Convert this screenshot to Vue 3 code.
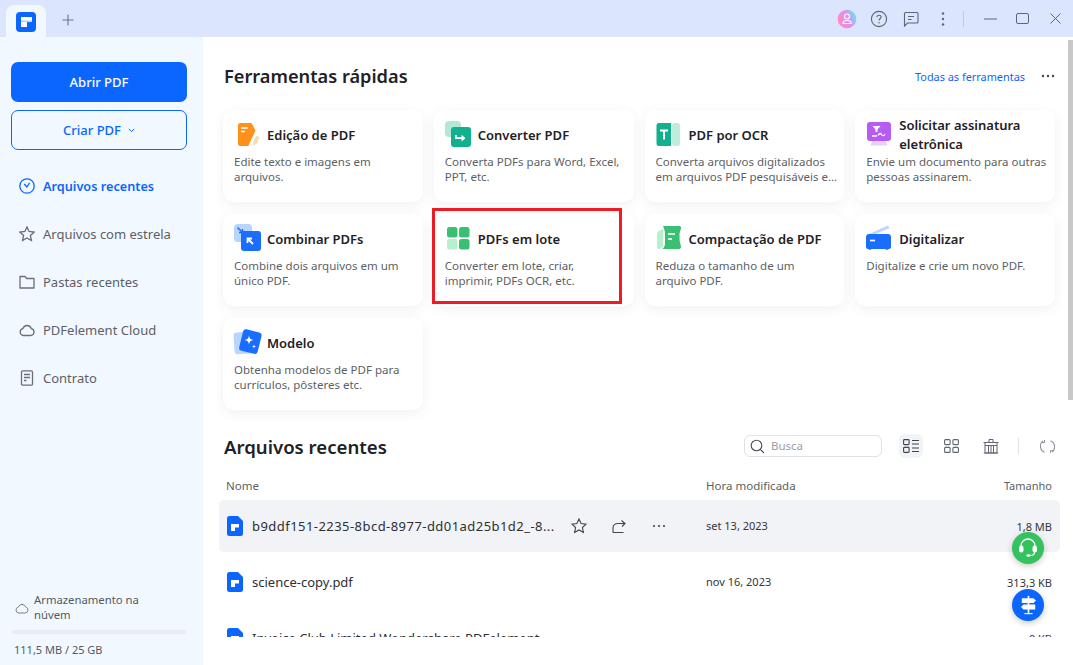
<script setup>
const nav = [
  { label: 'Arquivos recentes', icon: 'clock', active: true },
  { label: 'Arquivos com estrela', icon: 'star' },
  { label: 'Pastas recentes', icon: 'folder' },
  { label: 'PDFelement Cloud', icon: 'cloud' },
  { label: 'Contrato', icon: 'doc' },
]
const tools = [
  { title: 'Edição de PDF', desc: 'Edite texto e imagens em arquivos.', icon: 'edit' },
  { title: 'Converter PDF', desc: 'Converta PDFs para Word, Excel, PPT, etc.', icon: 'convert' },
  { title: 'PDF por OCR', desc: 'Converta arquivos digitalizados em arquivos PDF pesquisáveis e...', icon: 'ocr' },
  { title: 'Solicitar assinatura eletrônica', desc: 'Envie um documento para outras pessoas assinarem.', icon: 'sign' },
  { title: 'Combinar PDFs', desc: 'Combine dois arquivos em um único PDF.', icon: 'combine' },
  { title: 'PDFs em lote', desc: 'Converter em lote, criar, imprimir, PDFs OCR, etc.', icon: 'batch', marked: true },
  { title: 'Compactação de PDF', desc: 'Reduza o tamanho de um arquivo PDF.', icon: 'compress' },
  { title: 'Digitalizar', desc: 'Digitalize e crie um novo PDF.', icon: 'scan' },
  { title: 'Modelo', desc: 'Obtenha modelos de PDF para currículos, pôsteres etc.', icon: 'model' },
]
const files = [
  { name: 'b9ddf151-2235-8bcd-8977-dd01ad25b1d2_-8...', date: 'set 13, 2023', size: '1,8 MB', hover: true },
  { name: 'science-copy.pdf', date: 'nov 16, 2023', size: '313,3 KB' },
  { name: 'Invoice Club Limited Wondershare PDFelement', date: '', size: '0 KB' },
]
</script>

<template>
  <div class="app">
    <header class="titlebar">
      <div class="tab">
        <svg width="20" height="20" viewBox="0 0 20 20">
          <rect width="20" height="20" rx="4" fill="#0a66ff" />
          <path d="M5 5h11v5h-5v5H5z" fill="#fff" />
          <rect x="5" y="8.5" width="11" height="1.6" fill="#b9d2ff" />
        </svg>
      </div>
      <svg class="plus" width="12" height="12" viewBox="0 0 12 12">
        <path d="M6 .5v11M.5 6h11" stroke="#6f7480" stroke-width="1.1" fill="none" />
      </svg>
      <div class="win-tools">
        <div class="tbtn">
          <svg width="20" height="20" viewBox="0 0 20 20">
            <defs>
              <linearGradient id="av" x1="0" y1="0.7" x2="1" y2="0.3">
                <stop offset="0" stop-color="#ff8ac0" />
                <stop offset=".55" stop-color="#e58cf5" />
                <stop offset="1" stop-color="#5fe8f7" />
              </linearGradient>
            </defs>
            <circle cx="10" cy="10" r="9.3" fill="url(#av)" />
            <circle cx="10" cy="7.5" r="2.5" fill="none" stroke="#fff" stroke-width="1.1" />
            <path d="M5.8 14.5c0-2.2 1.8-3 4.2-3s4.2.8 4.2 3z" fill="none" stroke="#fff" stroke-width="1.1" />
          </svg>
        </div>
        <div class="tbtn">
          <svg width="18" height="18" viewBox="0 0 18 18">
            <circle cx="9" cy="9" r="7.6" fill="none" stroke="#5f6672" stroke-width="1.1" />
            <path d="M6.9 7.2c0-1.3 1-2 2.1-2s2.1.8 2.1 1.9c0 1.600-2.100 1.600-2.100 3.300" fill="none" stroke="#5f6672" stroke-width="1.1" />
            <circle cx="9" cy="12.700" r=".8" fill="#5f6672" />
          </svg>
        </div>
        <div class="tbtn">
          <svg width="16" height="16" viewBox="0 0 16 16">
            <path d="M2.500 1.500h11.500a1 1 0 0 1 1 1v8.500a1 1 0 0 1-1 1H4.500L1.500 15V2.500a1 1 0 0 1 1-1z" fill="none" stroke="#5f6672" stroke-width="1.100" />
            <path d="M5 5.500h6M5 8.500h3.500" stroke="#5f6672" stroke-width="1.100" fill="none" />
          </svg>
        </div>
        <div class="tbtn">
          <svg width="4" height="14" viewBox="0 0 4 14">
            <circle cx="2" cy="1.500" r="1.200" fill="#5f6672" />
            <circle cx="2" cy="7" r="1.200" fill="#5f6672" />
            <circle cx="2" cy="12.500" r="1.200" fill="#5f6672" />
          </svg>
        </div>
        <span class="tdivider"></span>
        <div class="tbtn">
          <svg width="13" height="2" viewBox="0 0 13 2"><path d="M0 1h13" stroke="#5f6672" stroke-width="1" /></svg>
        </div>
        <div class="tbtn">
          <svg width="13" height="11" viewBox="0 0 13 11"><rect x=".5" y=".5" width="12" height="10" rx="1.500" fill="none" stroke="#5f6672" /></svg>
        </div>
        <div class="tbtn close">
          <svg width="11" height="11" viewBox="0 0 11 11"><path d="M.5.5l10 10M10.500.5l-10 10" stroke="#5f6672" fill="none" /></svg>
        </div>
      </div>
    </header>

    <div class="body">
      <aside class="sidebar">
        <button class="btn primary"><span>Abrir PDF</span></button>
        <button class="btn outline">
          <span>Criar PDF</span>
          <svg width="7" height="5" viewBox="0 0 7 5"><path d="M.8 1l2.700 2.500L6.200 1" stroke="#0a66ff" fill="none" /></svg>
        </button>
        <nav class="nav">
          <div v-for="n in nav" :key="n.label" class="nav-item" :class="{ active: n.active }">
            <svg width="16" height="16" viewBox="0 0 16 16" fill="none" stroke="currentColor" stroke-width="1.300">
              <template v-if="n.icon === 'clock'">
                <circle cx="8" cy="8" r="7.200" />
                <path d="M5.300 6l2.500 3 2.800-4.200" />
              </template>
              <path v-else-if="n.icon === 'star'" d="M8 .9l2.100 4.600 5 .6-3.700 3.400 1 5L8 12 3.600 14.500l1-5L.9 6.100l5-.6z" />
              <path v-else-if="n.icon === 'folder'" d="M1 2.500h5l1.800 2H15v9.500H1z" stroke-linejoin="round" />
              <path v-else-if="n.icon === 'cloud'" d="M4.500 13.500a3.500 3.500 0 0 1-.6-6.900 4.400 4.400 0 0 1 8.400 0 3.500 3.500 0 0 1-.6 6.900z" />
              <template v-else>
                <rect x="2.500" y=".8" width="11" height="14.400" rx="1.200" />
                <path d="M5 4.500h6M5 7.500h6M5 10.500h2.500" />
              </template>
            </svg>
            <span>{{ n.label }}</span>
          </div>
        </nav>
        <div class="storage">
          <div class="storage-label">
            <svg width="14" height="11" viewBox="0 0 14 11" fill="none" stroke="#7b7f87">
              <path d="M3.800 10a3 3 0 0 1-.5-5.900 3.900 3.900 0 0 1 7.400 0 3 3 0 0 1-.5 5.900z" />
            </svg>
            <span>Armazenamento na núvem</span>
          </div>
          <div class="progress"></div>
          <div class="usage">111,5 MB / 25 GB</div>
        </div>
      </aside>

      <main class="main">
        <div class="scrollbar"></div>
        <div class="section-head">
          <h2>Ferramentas rápidas</h2>
          <a class="all">Todas as ferramentas</a>
          <svg class="more" width="14" height="4" viewBox="0 0 14 4">
            <circle cx="2" cy="2" r="1.200" fill="#444" /><circle cx="7" cy="2" r="1.200" fill="#444" /><circle cx="12" cy="2" r="1.200" fill="#444" />
          </svg>
        </div>

        <div class="grid">
          <div v-for="t in tools" :key="t.title" class="card">
            <div class="card-head">
              <svg class="tool-icon" width="28" height="28" viewBox="0 0 28 28">
                <template v-if="t.icon === 'edit'">
                  <path d="M19 21l3.500-6.500 3 1.700L23 22.500l-3.500 2z" fill="#fbd9a8" />
                  <path d="M6.500 2h9.500c1 0 1.800.5 2.300 1.400l3.200 6.200-7.200 15.400H6.500A2.500 2.500 0 0 1 4 22.500v-18A2.500 2.500 0 0 1 6.500 2z" fill="#ff9019" />
                  <path d="M7 7h7M7 10.500h4" stroke="#fff" stroke-width="1.500" />
                </template>
                <template v-else-if="t.icon === 'convert'">
                  <rect width="16" height="16" rx="4" fill="#b3e8d8" />
                  <rect x="6" y="6" width="20" height="20" rx="3" fill="#12b08e" />
                  <path d="M11 14v3.200h6" stroke="#fff" stroke-width="1.800" fill="none" />
                  <path d="M16.500 13.800l4 3.400-4 3.400z" fill="#fff" />
                </template>
                <template v-else-if="t.icon === 'ocr'">
                  <rect x="16" y="2" width="8" height="23" rx="2.500" fill="#bdeedd" />
                  <path d="M3 2h12v23H3a2.500 2.500 0 0 1-2.500-2.500v-18A2.500 2.500 0 0 1 3 2z" fill="#12b08e" />
                  <path d="M4 8.500h8v2H9v8H7v-8H4z" fill="#fff" />
                </template>
                <template v-else-if="t.icon === 'sign'">
                  <path d="M6 20h14l1.500 4.500h-17z" fill="#e6d0ff" />
                  <rect x="1" y="1" width="24" height="19" rx="3" fill="#b65cf5" />
                  <path d="M6.500 5h8l-3 3.500v2.500h-2V8.500z" fill="#fff" />
                  <path d="M6 15h5" stroke="#fff" stroke-width="1.500" />
                  <path d="M12 14.500c1.500-2.500 2.500-2.500 3.500-1s2 1.500 3.500 0" stroke="#fff" stroke-width="1.300" fill="none" />
                </template>
                <template v-else-if="t.icon === 'combine'">
                  <rect y="-1" width="18" height="18" rx="3.500" fill="#b8d6fd" />
                  <path d="M3.500 2.500l5 5M5 7.500h3.500V4" stroke="#1a6bf2" stroke-width="1.500" fill="none" />
                  <rect x="7" y="6" width="20" height="20" rx="3" fill="#1a6eff" />
                  <path d="M19 19l-5-5M13.500 18v-4.500H18" stroke="#fff" stroke-width="1.800" fill="none" />
                </template>
                <template v-else-if="t.icon === 'batch'">
                  <rect x="2" y="2" width="10.500" height="10.500" rx="2.500" fill="#3bbf73" />
                  <rect x="14" y="2" width="10.500" height="10.500" rx="2.500" fill="#3bbf73" />
                  <rect x="2" y="14" width="10.500" height="10.500" rx="2.500" fill="#b7f0cd" />
                  <rect x="14" y="14" width="10.500" height="10.500" rx="2.500" fill="#3bbf73" />
                </template>
                <template v-else-if="t.icon === 'compress'">
                  <path d="M3 6l4-2v18l-4 2c-1 .5-2-1-2-2V9c0-1 1-2.500 2-3z" fill="#b7f0cd" />
                  <path d="M7 1h16c1.500 0 2.500 1.200 2 2.500l-1.500 5 .1 7 1.400 6c.3 1.600-.7 2.500-2 2.500H6.500c2-2 2.500-4 2.500-6V9c0-3-1-6-2-8z" fill="#3bbf73" />
                  <path d="M12 9h7M12 14h4" stroke="#fff" stroke-width="1.700" />
                </template>
                <template v-else-if="t.icon === 'scan'">
                  <path d="M3 9L22 .5l1.500 2.500L7 10z" fill="#b8d6fd" />
                  <path d="M3 9h19c1.700 0 3 1.300 3 3v10c0 1-1 2-2 2h-.5l-1 .8h-1.500l-.6-.8H5.500l-.6.8H3.300l-.8-.8H2c-1 0-2-1-2-2V12c0-1.700 1.300-3 3-3z" fill="#1a6eff" />
                  <path d="M4 15.500h5" stroke="#fff" stroke-width="1.700" />
                </template>
                <template v-else>
                  <rect x="0" y="3" width="19" height="22" rx="3.500" fill="#b8d6fd" transform="rotate(-4 9 14)" />
                  <rect x="7" y="1.500" width="19" height="22" rx="3" fill="#1a6eff" transform="rotate(14 16 12)" />
                  <path d="M15 6.500c.5 3 1.500 4 4.500 4.500-3 .5-4 1.500-4.500 4.500-.5-3-1.500-4-4.500-4.500 3-.5 4-1.500 4.500-4.500z" fill="#fff" />
                  <path d="M20 15.500c.2 1.300.7 1.800 2 2-1.300.2-1.800.7-2 2-.2-1.300-.7-1.800-2-2 1.300-.2 1.800-.7 2-2z" fill="#fff" />
                </template>
              </svg>
              <h3>{{ t.title }}</h3>
            </div>
            <p :class="{ narrow: t.marked }">{{ t.desc }}</p>
            <div v-if="t.marked" class="marker"></div>
          </div>
        </div>

        <div class="recent-head">
          <h2>Arquivos recentes</h2>
          <div class="search">
            <svg width="15" height="15" viewBox="0 0 15 15" fill="none" stroke="#4a4f58" stroke-width="1.100">
              <circle cx="6.500" cy="6.500" r="5.300" /><path d="M10.500 10.500l3.500 3.500" />
            </svg>
            <span>Busca</span>
          </div>
          <div class="view active">
            <svg width="16" height="14" viewBox="0 0 16 14" fill="none" stroke="#3f4651" stroke-width="1.100">
              <rect x=".6" y=".6" width="5.500" height="5" rx=".8" /><rect x=".6" y="8.400" width="5.500" height="5" rx=".8" />
              <path d="M9 1.500h7M9 5h7M9 9h7M9 12.500h7" />
            </svg>
          </div>
          <div class="view">
            <svg width="15" height="14" viewBox="0 0 15 14" fill="none" stroke="#5f6672" stroke-width="1.100">
              <rect x=".6" y=".6" width="5.500" height="5" rx="1" /><rect x="8.900" y=".6" width="5.500" height="5" rx="1" />
              <rect x=".6" y="8.400" width="5.500" height="5" rx="1" /><rect x="8.900" y="8.400" width="5.500" height="5" rx="1" />
            </svg>
          </div>
          <div class="view">
            <svg width="16" height="16" viewBox="0 0 16 16" fill="none" stroke="#5f6672" stroke-width="1">
              <path d="M.5 4.500h15M6 4.500V1.500h4v3M2 4.500v10.500h12V4.500M.8 15h14.400M5.500 8v7M8 8v7M10.500 8v7M2 7.500h12" />
            </svg>
          </div>
          <span class="rdivider"></span>
          <div class="view">
            <svg width="15" height="15" viewBox="0 0 15 15" fill="none" stroke="#8b9099" stroke-width="1.100">
              <path d="M3 2a6.500 6.500 0 0 0 1.500 11.200M12 13a6.500 6.500 0 0 0-1.500-11.200" />
              <path d="M4.500 1v2.500H2M10.500 14v-2.500H13" stroke-width=".9" />
            </svg>
          </div>
        </div>

        <div class="table-head">
          <span class="col-name">Nome</span>
          <span class="col-date">Hora modificada</span>
          <span class="col-size">Tamanho</span>
        </div>

        <div class="list">
          <div v-for="f in files" :key="f.name" class="row" :class="{ hover: f.hover }">
            <div class="col-name name-cell">
              <svg width="16" height="20" viewBox="0 0 16 20">
                <path d="M2.500 0H11l5 5v12.500a2.500 2.500 0 0 1-2.500 2.500h-11A2.500 2.500 0 0 1 0 17.500v-15A2.500 2.500 0 0 1 2.500 0z" fill="#0a66ff" />
                <path d="M4 8h8v3.500H8V15H4z" fill="#fff" />
              </svg>
              <span class="fname">{{ f.name }}</span>
              <div v-if="f.hover" class="row-actions">
                <svg width="16" height="16" viewBox="0 0 16 16" fill="none" stroke="#3f4651" stroke-width="1.100">
                  <path d="M8 .9l2.100 4.600 5 .6-3.700 3.400 1 5L8 12 3.600 14.500l1-5L.9 6.100l5-.6z" />
                </svg>
                <svg width="14" height="14" viewBox="0 0 14 14" fill="none" stroke="#3f4651" stroke-width="1.100">
                  <path d="M1 13.500h10.500M1 13.500V9c0-3 2-4.500 5-4.500h6.500M9.500 1.500l3.500 3-3 3" />
                </svg>
                <svg width="14" height="4" viewBox="0 0 14 4">
                  <circle cx="2" cy="2" r="1.100" fill="#3f4651" /><circle cx="7" cy="2" r="1.100" fill="#3f4651" /><circle cx="12" cy="2" r="1.100" fill="#3f4651" />
                </svg>
              </div>
            </div>
            <span class="col-date cell-date">{{ f.date }}</span>
            <span class="col-size">{{ f.size }}</span>
          </div>
        </div>

        <div class="fab green">
          <svg width="22" height="22" viewBox="0 0 22 22">
            <path d="M4 11V9a7 7 0 0 1 14 0v2" fill="none" stroke="#fff" stroke-width="1.300" />
            <rect x="2" y="8.500" width="4.500" height="7" rx="2.200" fill="#fff" />
            <rect x="15.500" y="8.500" width="4.500" height="7" rx="2.200" fill="#fff" />
            <path d="M17.500 15c0 2.500-1.500 3.500-4 3.500" fill="none" stroke="#fff" stroke-width="1.200" />
            <ellipse cx="11.500" cy="18.500" rx="2.300" ry="1.300" fill="#fff" />
          </svg>
        </div>
        <div class="fab blue">
          <svg width="17" height="20" viewBox="0 0 20 24">
            <path d="M9 1h2v22H9z" fill="#fff" />
            <path d="M5 23h10v-1.300H5z" fill="#fff" />
            <path d="M2 4h14l3 2.700-3 2.800H2z" fill="#fff" />
            <path d="M18 11.500H4l-3 3 3 3h14z" fill="#fff" />
          </svg>
        </div>
      </main>
    </div>
  </div>
</template>

<style>
html, body { margin: 0; background: #fff; overflow: hidden; }
</style>

<style scoped>
.app {
  width: 1073px;
  height: 665px;
  display: flex;
  flex-direction: column;
  overflow: hidden;
  font-family: "Noto Sans", "Open Sans", sans-serif;
  color: #5c5f66;
}
.titlebar {
  height: 37px;
  flex: none;
  background: #dbe5fd;
  display: flex;
  align-items: flex-end;
}
.tab {
  width: 40px;
  height: 32px;
  margin-left: 6px;
  background: #f2f8ff;
  border-radius: 8px 8px 0 0;
  display: flex;
  align-items: flex-start;
  justify-content: center;
  padding-top: 7px;
  box-sizing: border-box;
}
.plus { margin: 0 0 11px 16px; }
.win-tools {
  margin-left: auto;
  height: 37px;
  display: flex;
  align-items: center;
  padding-right: 2px;
}
.tbtn {
  width: 32px;
  height: 37px;
  display: flex;
  align-items: center;
  justify-content: center;
}
.tbtn.close { margin-left: 1px; }
.tdivider {
  width: 1px;
  height: 16px;
  background: #c5cad6;
  margin: 0 10px 0 4px;
}
.body { flex: 1; display: flex; min-height: 0; }
.sidebar {
  width: 203px;
  flex: none;
  background: #f2f8ff;
  box-sizing: border-box;
  padding: 25px 16px 0 11px;
  display: flex;
  flex-direction: column;
}
.btn {
  height: 40px;
  width: 176px;
  border-radius: 7px;
  font: 500 13px "Noto Sans", sans-serif;
  display: flex;
  align-items: center;
  justify-content: center;
  gap: 7px;
  box-sizing: border-box;
  padding: 0;
}
.primary { background: #0a66ff; color: #fff; border: none; }
.outline { background: transparent; color: #0a66ff; border: 1px solid #0a66ff; margin-top: 8px; }
.nav { margin-top: 12px; display: flex; flex-direction: column; }
.nav-item {
  height: 48px;
  display: flex;
  align-items: center;
  gap: 8px;
  padding-left: 8px;
  font-size: 13px;
  color: #5c5f66;
}
.nav-item svg { flex: none; color: #6b6f76; }
.nav-item.active { color: #0a66ff; font-weight: 600; font-size: 12.7px; }
.nav-item.active svg { color: #0a66ff; }
.storage { margin-top: auto; padding-bottom: 7px; }
.storage-label {
  display: flex;
  align-items: center;
  gap: 5px;
  padding-left: 4px;
  font-size: 11.3px;
  line-height: 15px;
  color: #55585e;
}
.storage-label span { width: 130px; padding-bottom: 2px; }
.progress {
  height: 4px;
  margin: 6px 1px 0 1px;
  width: 174px;
  background: #e9edf2;
  border-radius: 2px;
}
.usage { font-size: 11px; line-height: 16px; margin: 8px 0 0 3px; color: #55585e; }
.main {
  flex: 1;
  min-width: 0;
  position: relative;
  background: #fff;
  padding: 0 18px 0 20px;
  box-sizing: border-box;
}
.scrollbar {
  position: absolute;
  right: 0;
  top: 3px;
  width: 5px;
  height: 360px;
  background: #c9c9c9;
}
.section-head {
  height: 40px;
  margin-top: 19px;
  display: flex;
  align-items: center;
  padding-left: 1px;
}
h2 { font-size: 18.6px; font-weight: 600; color: #1f2126; margin: 0; }
.section-head h2 { font-size: 18.2px; }
.all { margin-left: auto; margin-right: -1px; font-size: 10.9px; color: #0a66ff; }
.more { margin-left: 17px; }
.grid {
  margin-top: 14px;
  display: grid;
  grid-template-columns: repeat(4, 1fr);
  grid-auto-rows: 92px;
  gap: 12px 11px;
}
.card {
  position: relative;
  border-radius: 10px;
  background: #fff;
  box-shadow: 0 3px 12px rgba(60, 80, 130, 0.08);
  padding: 13px 6px 0 11px;
  box-sizing: border-box;
}
.card-head { height: 24px; display: flex; align-items: center; gap: 5px; margin-bottom: 7px; }
.tool-icon { flex: none; overflow: visible; margin-top: -4px; margin-bottom: -4px; }
h3 { font-size: 13px; font-weight: 600; line-height: 19px; color: #1f2126; margin: 0; }
.card p {
  margin: 0;
  font-size: 11.5px;
  line-height: 15px;
  color: #5c5f66;
}
.card p.narrow { max-width: 170px; }
.marker {
  position: absolute;
  left: -2px;
  top: -6px;
  width: 190px;
  height: 96px;
  box-sizing: border-box;
  border: 3px solid #ed1c24;
  pointer-events: none;
}
.recent-head {
  margin: 20px -4px 0 0;
  height: 32px;
  display: flex;
  align-items: center;
  padding-left: 1px;
}
.search {
  margin-left: auto;
  width: 138px;
  height: 22px;
  box-sizing: border-box;
  border: 1px solid #dfe2e7;
  border-radius: 6px;
  display: flex;
  align-items: center;
  gap: 6px;
  padding-left: 5px;
  font-size: 11.5px;
  color: #9a9ea6;
}
.search span { padding-bottom: 2px; }
.view {
  width: 24px;
  height: 24px;
  margin-left: 16px;
  border-radius: 6px;
  display: flex;
  align-items: center;
  justify-content: center;
}
.view.active { background: #f1f3f7; margin-left: 17px; }
.rdivider { width: 1px; height: 16px; background: #dfe2e7; margin-left: 15px; }
.rdivider + .view { margin-left: 16px; }
.table-head {
  margin: 13px 3px 5px -1px;
  height: 20px;
  display: flex;
  align-items: center;
  padding-left: 4px;
  font-size: 11.5px;
  color: #5c5f66;
}
.table-head .col-size { font-size: 11px; }
.col-name { width: 480px; flex: none; }
.col-date { flex: 1; }
.col-size { text-align: right; }
.list {
  height: 137px;
  margin: 0 -5px 0 -4px;
  overflow: hidden;
  display: flex;
  flex-direction: column;
  gap: 4px;
}
.row {
  height: 52px;
  flex: none;
  border-radius: 5px;
  display: flex;
  align-items: center;
  padding: 0 8px 0 8px;
  font-size: 11px;
  color: #33363c;
}
.row.hover { background: #f1f3f7; }
.name-cell { width: 479px; display: flex; align-items: center; gap: 9px; }
.name-cell svg { flex: none; }
.fname { font-size: 13px; white-space: nowrap; color: #2c2f35; padding-bottom: 1px; }
.row.hover .fname { letter-spacing: .45px; }
.row-actions { display: flex; align-items: center; margin-left: 7px; gap: 25.5px; }
.cell-date { color: #33363c; padding-bottom: 1px; }
.fab {
  position: absolute;
  width: 32px;
  height: 32px;
  border-radius: 50%;
  display: flex;
  align-items: center;
  justify-content: center;
  box-shadow: 0 2px 6px rgba(0, 0, 0, 0.22);
  left: 809px;
}
.green { top: 495px; background: #34c25e; }
.blue { top: 552px; background: #0a66ff; }
</style>
